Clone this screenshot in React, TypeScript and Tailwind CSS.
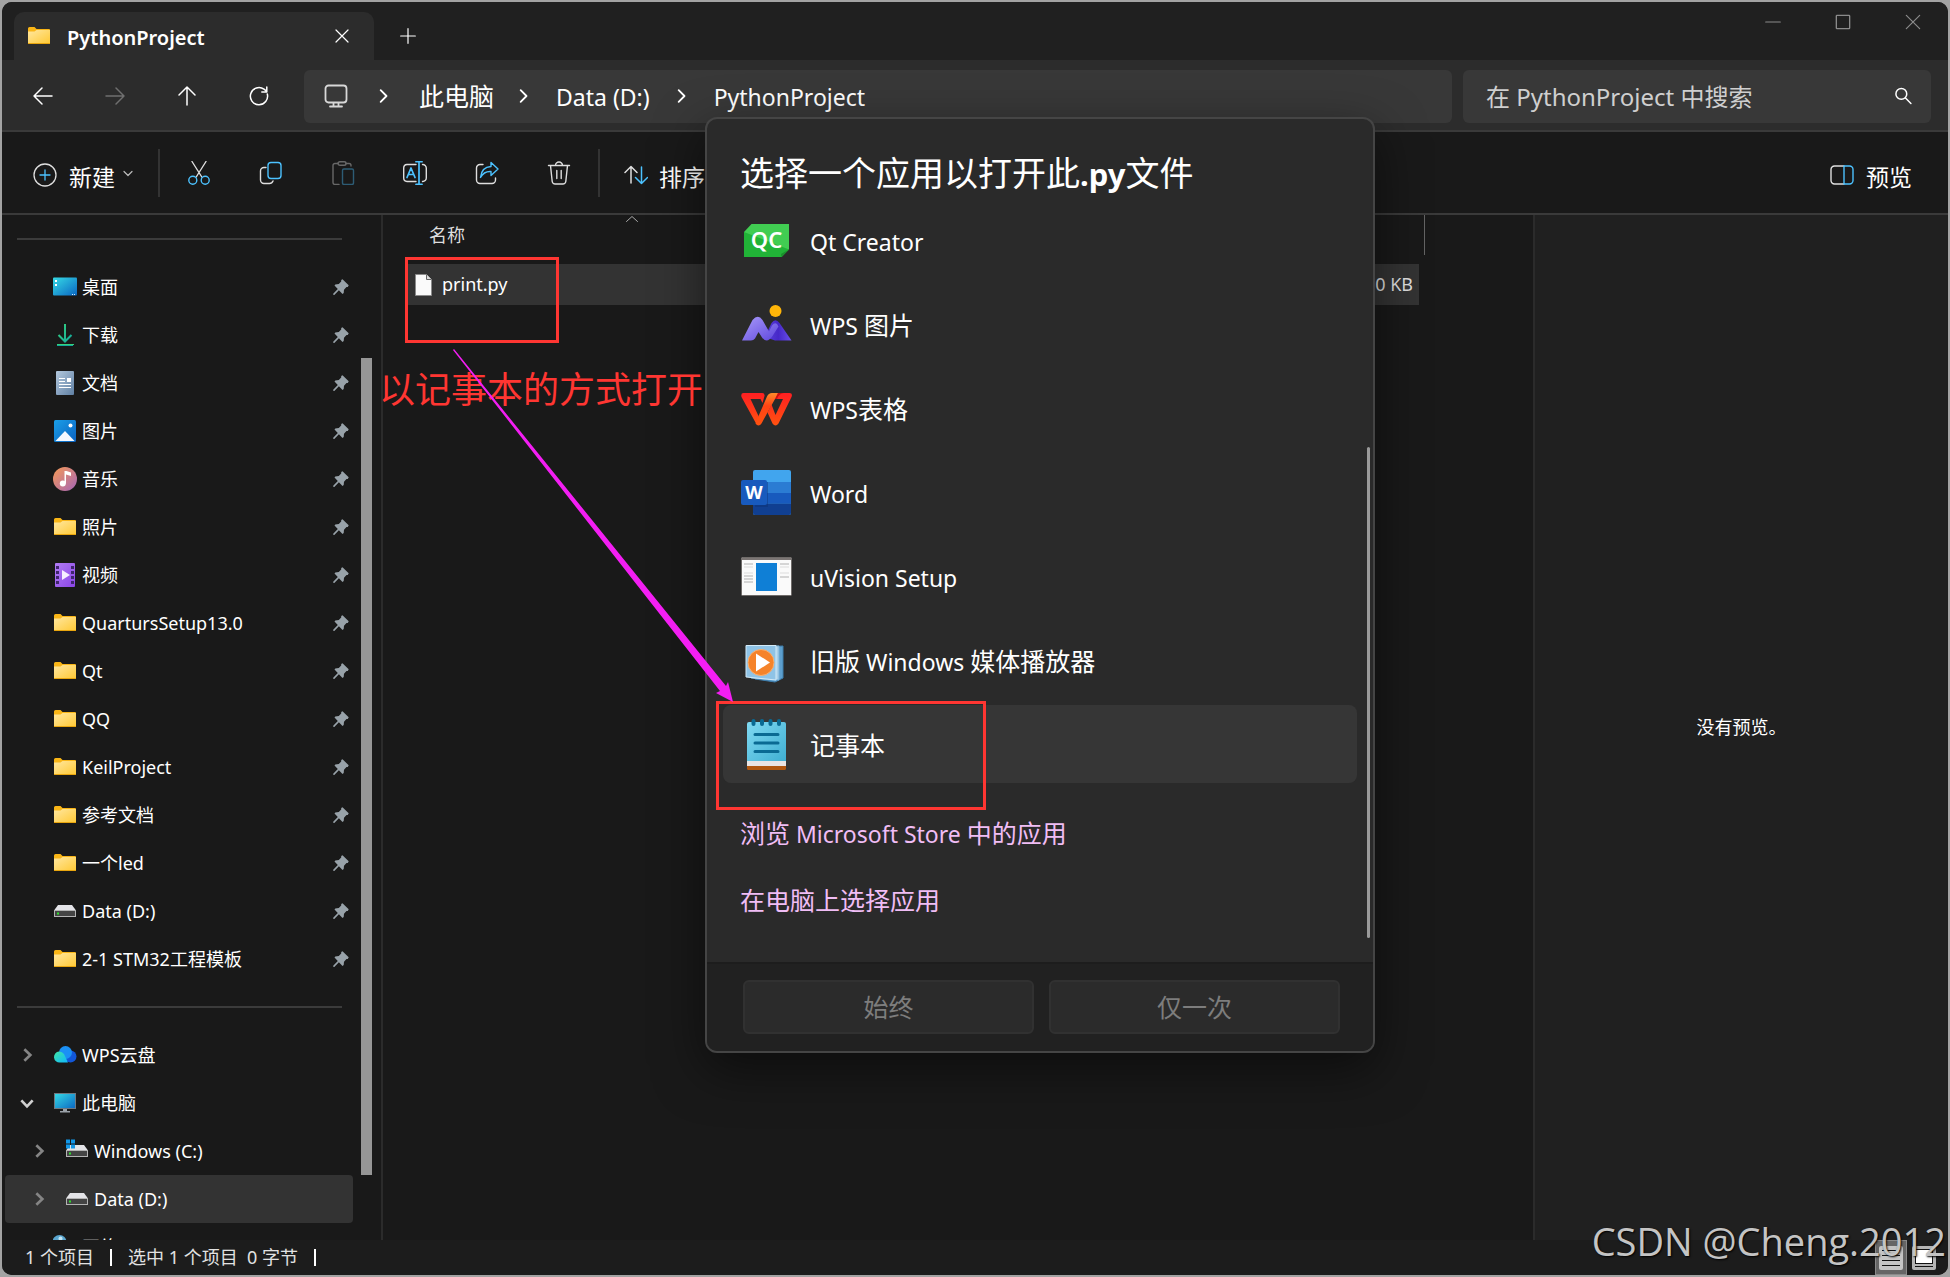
import type { ReactNode } from 'react';

type IconName =
    | 'desktop'
    | 'download'
    | 'document'
    | 'picture'
    | 'music'
    | 'folder'
    | 'video'
    | 'drive'
    | 'cloud'
    | 'pc'
    | 'windrive'
    | 'network';

type NavItem = {
    label: string;
    icon: IconName;
    pinned?: boolean;
    level?: number;
    arrow?: 'right' | 'down';
    active?: boolean;
};

const pinnedItems: NavItem[] = [
    { label: '桌面', icon: 'desktop', pinned: true },
    { label: '下载', icon: 'download', pinned: true },
    { label: '文档', icon: 'document', pinned: true },
    { label: '图片', icon: 'picture', pinned: true },
    { label: '音乐', icon: 'music', pinned: true },
    { label: '照片', icon: 'folder', pinned: true },
    { label: '视频', icon: 'video', pinned: true },
    { label: 'QuartursSetup13.0', icon: 'folder', pinned: true },
    { label: 'Qt', icon: 'folder', pinned: true },
    { label: 'QQ', icon: 'folder', pinned: true },
    { label: 'KeilProject', icon: 'folder', pinned: true },
    { label: '参考文档', icon: 'folder', pinned: true },
    { label: '一个led', icon: 'folder', pinned: true },
    { label: 'Data (D:)', icon: 'drive', pinned: true },
    { label: '2-1 STM32工程模板', icon: 'folder', pinned: true },
];

const treeItems: NavItem[] = [
    { label: 'WPS云盘', icon: 'cloud', arrow: 'right' },
    { label: '此电脑', icon: 'pc', arrow: 'down' },
    { label: 'Windows (C:)', icon: 'windrive', arrow: 'right', level: 1 },
    { label: 'Data (D:)', icon: 'drive', arrow: 'right', level: 1, active: true },
    { label: '网络', icon: 'network', arrow: 'right' },
];

// Latin runs look larger than the Chinese ones at the same size, so they get their own class
function Mixed({ text, latin }: { text: string; latin: string }) {
    return (
        <>
            {text.split(/([\x20-\x7e]+)/).map((part, i) =>
                i % 2 === 1 ? (
                    <span key={i} className={latin}>
                        {part}
                    </span>
                ) : (
                    part
                )
            )}
        </>
    );
}

function Line({ children, className = 'size-6', width = 1.4 }: { children: ReactNode; className?: string; width?: number }) {
    return (
        <svg
            viewBox="0 0 24 24"
            className={`shrink-0 ${className}`}
            fill="none"
            stroke="currentColor"
            strokeWidth={width}
            strokeLinecap="round"
            strokeLinejoin="round"
            aria-hidden="true"
        >
            {children}
        </svg>
    );
}

function FolderIcon() {
    return (
        <svg viewBox="0 0 24 24" className="size-6 shrink-0" aria-hidden="true">
            <defs>
                <linearGradient id="folder" x1="0" y1="0" x2="1" y2="1">
                    <stop offset="0" stopColor="#ffe7a0" />
                    <stop offset="1" stopColor="#ffc935" />
                </linearGradient>
            </defs>
            <path d="M1 4.5Q1 3 2.5 3h5L9.500 5H22q1 0 1 1v13H1z" fill="#f9b516" />
            <path d="M1 7.500h6.500L9.500 6H23v13.500H1z" fill="url(#folder)" />
            <path d="M1 19.500h22" stroke="#e8a50e" />
        </svg>
    );
}

function DriveShape() {
    return (
        <>
            <path d="M5 6h14l4 5.500H1z" fill="#e4e4e8" />
            <rect x="1.500" y="11.500" width="21" height="6" fill="#444" stroke="#b4b4b4" />
            <rect x="4" y="13.500" width="2" height="2" fill="#2fe02f" />
        </>
    );
}

function NavIcon({ name }: { name: IconName }) {
    if (name === 'folder') return <FolderIcon />;
    return (
        <svg viewBox="0 0 24 24" className="size-6 shrink-0" aria-hidden="true">
            <defs>
                <linearGradient id="teal" x1="0" y1="0" x2="1" y2="1">
                    <stop offset="0" stopColor="#36dbe6" />
                    <stop offset="1" stopColor="#0a66c2" />
                </linearGradient>
                <linearGradient id="green" x1="0" y1="0" x2="1" y2="1">
                    <stop offset="0" stopColor="#37d27c" />
                    <stop offset="1" stopColor="#12a89d" />
                </linearGradient>
                <linearGradient id="slate" x1="0" y1="0" x2="1" y2="1">
                    <stop offset="0" stopColor="#b4c9de" />
                    <stop offset="1" stopColor="#5f7fa3" />
                </linearGradient>
                <linearGradient id="blue" x1="0" y1="0" x2="1" y2="1">
                    <stop offset="0" stopColor="#1a9fe8" />
                    <stop offset="1" stopColor="#0b62c0" />
                </linearGradient>
                <linearGradient id="music" x1="0" y1="0" x2="1" y2="1">
                    <stop offset="0" stopColor="#f79a55" />
                    <stop offset="1" stopColor="#a464b8" />
                </linearGradient>
                <linearGradient id="purple" x1="0" y1="0" x2="1" y2="1">
                    <stop offset="0" stopColor="#b27cf5" />
                    <stop offset="1" stopColor="#8a45e6" />
                </linearGradient>
                <linearGradient id="cloudL" x1="0" y1="0" x2="1" y2="1">
                    <stop offset="0" stopColor="#3fe6a4" />
                    <stop offset="1" stopColor="#0fb6ff" />
                </linearGradient>
            </defs>
            {name === 'desktop' && (
                <>
                    <rect y="2.500" width="24" height="18" rx="1" fill="url(#teal)" />
                    <path d="M2 5h2v2H2zM2 9h2v2H2z" fill="#fff" />
                    <path d="M19 19.500h1M21 19.500h1" stroke="#cfe9ff" />
                </>
            )}
            {name === 'download' && (
                <g stroke="url(#green)" strokeWidth="2" fill="none">
                    <path d="M12.010 1 12 18M5.500 12l6.500 6.500 6.500-6.500" />
                    <path d="M4 22h16v.01" />
                </g>
            )}
            {name === 'document' && (
                <>
                    <rect x="3" width="18" height="24" rx="1" fill="url(#slate)" />
                    <path d="M6 7.500h6M6 10.500h6M6 13.500h12M6 16.500h12" stroke="#fff" />
                    <rect x="14" y="7" width="4" height="4" fill="#fff" />
                </>
            )}
            {name === 'picture' && (
                <>
                    <rect x="1" y="1" width="22" height="22" rx="1.500" fill="url(#blue)" />
                    <path d="M2.500 22 12 12l9.500 10z" fill="#f4f9ff" />
                    <circle cx="17.500" cy="6.500" r="2" fill="#fff" />
                </>
            )}
            {name === 'music' && (
                <>
                    <circle cx="12" cy="12" r="12" fill="url(#music)" />
                    <circle cx="9.800" cy="16.500" r="3" fill="#fff" />
                    <path d="M11.500 4h2l4.500 1.500V9l-5-1.500v9h-1.500z" fill="#fff" />
                </>
            )}
            {name === 'video' && (
                <>
                    <rect x="2" width="20" height="24" rx="1" fill="url(#purple)" />
                    <path d="M3 3h3v3H3zM3 8h3v3H3zM3 13h3v3H3zM3 18h3v3H3zM18 3h3v3h-3zM18 8h3v3h-3zM18 13h3v3h-3zM18 18h3v3h-3z" fill="#40256e" />
                    <path d="M9 7v10l8-5z" fill="#f6efff" />
                </>
            )}
            {name === 'drive' && <DriveShape />}
            {name === 'windrive' && (
                <>
                    <DriveShape />
                    <path d="M1 .5h4v4H1zM6 .5h4v4H6zM1 5.500h4v4H1zM6 5.500h4v4H6z" fill="#1297e8" />
                </>
            )}
            {name === 'cloud' && (
                <>
                    <circle cx="17.500" cy="13.500" r="6" fill="#1257d8" />
                    <circle cx="12.500" cy="9.500" r="6.500" fill="#1b90f5" />
                    <path d="M6 8.500a5.500 5.500 0 1 0 1 11h8L11 11a6 6 0 0 0-5-2.500" fill="url(#cloudL)" />
                </>
            )}
            {name === 'pc' && (
                <>
                    <rect x="1.500" y="2.500" width="21" height="15" fill="url(#teal)" stroke="#6f7880" />
                    <path d="M10 18h4v2h3v1.500H7V20h3z" fill="#9aa1a8" />
                </>
            )}
            {name === 'network' && (
                <>
                    <circle cx="6.500" cy="7" r="7" fill="#5aa6cf" />
                    <circle cx="7.500" cy="3.500" r="2" fill="#c3e6f5" />
                </>
            )}
        </svg>
    );
}

function Pin() {
    return (
        <svg viewBox="0 0 16 16" className="size-4 shrink-0" fill="#98a2a9" aria-hidden="true">
            <path d="M9.500.3 15.700 6.200 14.800 8h-1.300L11 10.700l-.3 3.300-1.200.9-3.600-3.700L1.300 16 .2 15.700v-1L4.800 10 1.500 6.500l.8-1.100 3.500-.3L8.200 2.500V1z" />
        </svg>
    );
}

function NavRow({ item }: { item: NavItem }) {
    return (
        <li>
            <button
                type="button"
                className={`flex h-12 w-full items-center rounded-sm pr-1 text-left text-[18px] leading-6 whitespace-nowrap text-white ${
                    item.active ? 'bg-[#333333]' : ''
                } ${item.level ? 'pl-[26px]' : 'pl-[14px]'}`}
            >
                <span className="mr-[18px] flex size-4 items-center justify-center">
                    {item.arrow === 'right' && (
                        <Line className="size-4 text-[#858585]" width={4}>
                            <path d="M8 3.500 17 12l-9 8.500" strokeLinecap="butt" strokeLinejoin="miter" />
                        </Line>
                    )}
                    {item.arrow === 'down' && (
                        <Line className="size-4 text-[#d0d0d0]" width={4}>
                            <path d="M3.500 8 12 17l8.500-9" strokeLinecap="butt" strokeLinejoin="miter" />
                        </Line>
                    )}
                </span>
                <NavIcon name={item.icon} />
                <span className="ml-[5px] flex-1">{item.label}</span>
                {item.pinned && <Pin />}
            </button>
        </li>
    );
}

function TitleBar() {
    return (
        <header className="flex h-[58px] items-end bg-[#202020]">
            <div className="ml-3 flex h-[48px] w-[360px] items-center rounded-t-[10px] bg-[#2c2c2c] pr-6 pl-[13px]">
                <FolderIcon />
                <span className="ml-4 flex-1 pt-[3px] text-[20px] font-semibold text-white">PythonProject</span>
                <button type="button" aria-label="关闭标签页" className="text-white">
                    <Line className="size-4" width={1.8}>
                        <path d="m3 3 18 18M21 3 3 21" />
                    </Line>
                </button>
            </div>
            <button type="button" aria-label="新建标签页" className="mb-4 ml-[26px] text-white">
                <Line className="size-4" width={1.8}>
                    <path d="M12 1v22M1 12h22" />
                </Line>
            </button>
            <div className="ml-auto flex gap-[54px] self-start pt-3 pr-[27px] text-[#8a8a8a]">
                <button type="button" aria-label="最小化">
                    <Line className="size-4" width={1.6}>
                        <path d="M1 12h22" />
                    </Line>
                </button>
                <button type="button" aria-label="最大化">
                    <Line className="size-4" width={2}>
                        <rect x="2" y="2" width="20" height="20" rx="1" />
                    </Line>
                </button>
                <button type="button" aria-label="关闭">
                    <Line className="size-4" width={1.8}>
                        <path d="m2 2 20 20M22 2 2 22" />
                    </Line>
                </button>
            </div>
        </header>
    );
}

function Crumb() {
    return (
        <Line className="size-5 text-white" width={2.2}>
            <path d="m8 5 7 7-7 7" />
        </Line>
    );
}

function AddressBar() {
    return (
        <div className="flex h-[70px] items-center bg-[#2c2c2c] pt-[2px] pr-[17px] pl-[29px]">
            <nav className="flex w-[273px] items-center gap-12 text-white">
                <button type="button" aria-label="后退">
                    <Line width={1.5}>
                        <path d="M21 12H3M11 4l-8 8 8 8" />
                    </Line>
                </button>
                <button type="button" aria-label="前进" className="text-[#6f6f6f]">
                    <Line width={1.5}>
                        <path d="M3 12h18M13 4l8 8-8 8" />
                    </Line>
                </button>
                <button type="button" aria-label="向上">
                    <Line width={1.5}>
                        <path d="M12 21V3M4 11l8-8 8 8" />
                    </Line>
                </button>
                <button type="button" aria-label="刷新">
                    <Line width={1.5}>
                        <path d="M20.300 10A8.600 8.600 0 1 1 17 5.200l2.500 2M19.800 3v5h-5" />
                    </Line>
                </button>
            </nav>
            <div className="flex h-[53px] flex-1 items-center rounded-md bg-[#383838] pl-5 text-[25px] text-white">
                <Line className="size-6 text-[#d8d8d8]" width={1.8}>
                    <rect x="1.500" y="1.500" width="21" height="17" rx="3" />
                    <path d="M9.500 19v2.500M14.500 19v2.500M6 22.500h12" />
                </Line>
                <span className="ml-[26px] flex">
                    <Crumb />
                </span>
                <a href="#pc" className="ml-[25px] pt-[2px]">
                    此电脑
                </a>
                <span className="ml-5 flex">
                    <Crumb />
                </span>
                <a href="#data" className="ml-[22px] pt-[2px] text-[23px]">
                    Data (D:)
                </a>
                <span className="ml-[22px] flex">
                    <Crumb />
                </span>
                <a href="#project" className="ml-[22px] pt-[2px] text-[23px]">
                    PythonProject
                </a>
            </div>
            <label className="ml-[11px] flex h-[53px] w-[468px] items-center rounded-md bg-[#383838] pr-[18px] pl-[23px]">
                <input
                    type="text"
                    aria-label="搜索"
                    placeholder="在 PythonProject 中搜索"
                    className="min-w-0 flex-1 bg-transparent pt-[2px] text-[24px] text-white outline-none placeholder:text-[#cfcfcf]"
                />
                <Line className="size-5 text-white" width={1.8}>
                    <circle cx="10" cy="9.500" r="6.500" />
                    <path d="m15 14.500 6.500 6.500" />
                </Line>
            </label>
        </div>
    );
}

function ToolButton({ label, children }: { label: string; children: ReactNode }) {
    return (
        <button type="button" aria-label={label} className="flex h-12 w-[72px] items-center justify-center text-[#dedede]">
            {children}
        </button>
    );
}

const accent = '#4cc2ff';

function Toolbar() {
    return (
        <div className="flex h-[85px] items-center border-y-2 border-[#3a3a3a] bg-[#191919] pr-9 pl-[31px]">
            <button type="button" className="mt-1 mr-6 flex items-center text-[23px] text-white">
                <Line width={1.3}>
                    <circle cx="12" cy="12" r="11" stroke="#dedede" />
                    <path d="M12 7v10M7 12h10" stroke={accent} />
                </Line>
                <span className="mt-[6px] ml-3">新建</span>
                <Line className="ml-[7px] size-3 text-[#bbb]" width={2.4}>
                    <path d="m4 5 8 8 8-8" />
                </Line>
            </button>
            <span className="h-12 w-[2px] bg-[#333]" />
            <div className="ml-[3px] flex">
                <ToolButton label="剪切">
                    <Line>
                        <path d="M5 .5 14.800 16M19 .5 9.200 16" />
                        <circle cx="5.800" cy="19.300" r="4" stroke={accent} />
                        <circle cx="18.200" cy="19.300" r="4" stroke={accent} />
                    </Line>
                </ToolButton>
                <ToolButton label="复制">
                    <Line>
                        <path d="M7 6.500H5a3.500 3.500 0 0 0-3.500 3.500v9A3.500 3.500 0 0 0 5 22.500h5.500q2.500 0 3.500-2.500" />
                        <rect x="9" y="1.500" width="13" height="16" rx="3" stroke={accent} />
                    </Line>
                </ToolButton>
                <ToolButton label="粘贴">
                    <Line className="size-6 opacity-40">
                        <path d="M7 2.500H4A2 2 0 0 0 2 4.500v17a2 2 0 0 0 2 2h4M15 2.500h3a2 2 0 0 1 2 2V5" />
                        <rect x="7" y=".7" width="8" height="3.600" rx="1.800" />
                        <rect x="11.500" y="8" width="11" height="15.500" rx="1.500" stroke={accent} />
                    </Line>
                </ToolButton>
                <ToolButton label="重命名">
                    <Line>
                        <path d="M13 3.500H4A3.500 3.500 0 0 0 .7 7v10A3.500 3.500 0 0 0 4 20.500h9M19.500 3.500a3.500 3.500 0 0 1 3.800 3.500v10a3.500 3.500 0 0 1-3.800 3.500" />
                        <path d="m4 16.500 4-9.500 4 9.500M5.500 13.500h5M16 1v22M13 .7h6M13 23.300h6" stroke={accent} strokeWidth="1.700" />
                    </Line>
                </ToolButton>
                <ToolButton label="共享">
                    <Line>
                        <path d="M8 3.500H5A3.500 3.500 0 0 0 1.500 7v12A3.500 3.500 0 0 0 5 22.500h12a3.500 3.500 0 0 0 3.500-3.500v-2" />
                        <path d="M16 1.500 23 8l-7 6.500v-4Q9 10 5.500 16.500 6.500 6 16 5.500z" stroke={accent} />
                    </Line>
                </ToolButton>
                <ToolButton label="删除">
                    <Line>
                        <path d="M1.500 4.500h21M8.500 4.500a3.500 3.500 0 0 1 7 0M3.500 4.500l1.700 16a3 3 0 0 0 3 2.500h7.600a3 3 0 0 0 3-2.500l1.700-16M9.800 9.500v8M14.200 9.500v8" />
                    </Line>
                </ToolButton>
            </div>
            <span className="ml-[3px] h-12 w-[2px] bg-[#333]" />
            <button type="button" className="mt-1 ml-6 flex items-center text-[23px] text-white">
                <Line width={1.500}>
                    <path d="M7 20V3.500M1 9.500l6-6 6 6" stroke="#dedede" />
                    <path d="M17.500 4v16.500M11.500 14.500l6 6 6-6" stroke={accent} />
                </Line>
                <span className="mt-[6px] ml-[11px]">排序</span>
            </button>
            <button type="button" className="mt-1 ml-auto flex items-center text-[23px] text-white">
                <Line width={1.400}>
                    <path d="M14 3H4.500A3.500 3.500 0 0 0 1 6.500v11A3.500 3.500 0 0 0 4.500 21H14" stroke="#dedede" />
                    <path d="M14 3h5.500A3.500 3.500 0 0 1 23 6.500v11a3.500 3.500 0 0 1-3.500 3.500H14z" stroke={accent} />
                </Line>
                <span className="mt-[6px] ml-3">预览</span>
            </button>
        </div>
    );
}

function Sidebar() {
    return (
        <aside className="flex w-[381px] shrink-0 border-r-2 border-[#2b2b2b] pl-[3px]">
            <div className="w-[348px] overflow-hidden">
                <div className="flex h-12 items-center pr-[11px] pl-3">
                    <hr className="w-full border-t-2 border-[#3b3b3b]" />
                </div>
                <ul>
                    {pinnedItems.map((item) => (
                        <NavRow key={item.label} item={item} />
                    ))}
                </ul>
                <div className="flex h-12 items-center pr-[11px] pl-3">
                    <hr className="w-full border-t-2 border-[#3b3b3b]" />
                </div>
                <ul>
                    {treeItems.map((item) => (
                        <NavRow key={item.label} item={item} />
                    ))}
                </ul>
            </div>
            <div className="mt-[143px] mb-[65px] ml-2 w-[11px] bg-[#969696]" />
        </aside>
    );
}

function FileList() {
    return (
        <main className="flex min-w-0 flex-1 items-start pl-[24px]">
            <table className="flex-1 border-collapse text-[18px]">
                <thead>
                    <tr>
                        <th className="relative h-[49px] w-[450px] pb-[9px] pl-[22px] text-left font-normal text-[#dedede]">
                            名称
                            <Line className="absolute top-0 left-1/2 -ml-1.5 size-3 text-[#aaa]" width={2}>
                                <path d="M1 13 12 3l11 10" />
                            </Line>
                        </th>
                        <th aria-label="大小" />
                    </tr>
                </thead>
                <tbody>
                    <tr className="h-[41px] bg-[#333333] text-white">
                        <td className="pl-2">
                            <span className="flex items-center gap-[10px]">
                                <svg viewBox="0 0 17 22" className="h-[22px] w-[17px]" aria-hidden="true">
                                    <path d="M.5.5h11l5 5v16H.5z" fill="#fafafa" stroke="#8b8b8b" />
                                    <path d="M11.500.5v5h5" fill="#ddd" stroke="#666" />
                                </svg>
                                <span>print.py</span>
                            </span>
                        </td>
                        <td className="pr-1.5 text-right text-[#dedede]">0 KB</td>
                    </tr>
                </tbody>
            </table>
            <div className="mr-[108px] ml-[5px] h-10 w-px bg-[#636363]" />
        </main>
    );
}

function StatusBar() {
    return (
        <footer className="flex h-[35px] items-center bg-[#1c1c1c] pr-3 pl-[23px] text-[18px] text-[#e2e2e2]">
            <span>1 个项目</span>
            <span className="ml-4 h-[17px] w-[2px] bg-white" />
            <span className="ml-4 whitespace-pre">选中 1 个项目  0 字节</span>
            <span className="ml-4 h-[17px] w-[2px] bg-white" />
            <button
                type="button"
                aria-label="详细信息"
                className="ml-auto flex h-full w-8 items-center justify-center border border-[#8a8a8a] bg-[#666]"
            >
                <svg viewBox="0 0 24 24" className="size-6">
                    <rect width="24" height="24" rx="2" fill="#c4c4c4" />
                    <path d="M3 4.500h18M3 9.500h18M3 14.500h18M3 19.500h18" stroke="#111" />
                </svg>
            </button>
            <button type="button" aria-label="大缩略图" className="ml-[5px]">
                <svg viewBox="0 0 24 24" className="size-6">
                    <rect width="24" height="24" rx="2" fill="#b4b4b4" />
                    <rect x="3.500" y="3.500" width="17" height="14" fill="#fff" stroke="#111" />
                    <path d="M3 20.500h18" stroke="#111" />
                </svg>
            </button>
        </footer>
    );
}

function QtIcon() {
    return (
        <svg viewBox="0 0 51 51" className="size-[51px] shrink-0" aria-hidden="true">
            <path d="M10.500 9H48v25l-7.500 8H3V17z" fill="#41cd52" />
            <path d="M3 17 48 34.500l-7.500 7.500H3z" fill="#21b337" />
            <path d="M48 34.500 40.500 42l-.5-3z" fill="#1a8f2c" />
            <text x="25.500" y="33" textAnchor="middle" fontSize="22" fontWeight="600" fill="#fff" fontFamily="Noto Sans">
                QC
            </text>
        </svg>
    );
}

function WpsPictureIcon() {
    return (
        <svg viewBox="0 0 51 51" className="size-[51px] shrink-0" aria-hidden="true">
            <defs>
                <linearGradient id="hillL" x1="0" y1="0" x2="1" y2="1">
                    <stop offset="0" stopColor="#a99bfa" />
                    <stop offset="1" stopColor="#5d45dc" />
                </linearGradient>
                <linearGradient id="hillR" x1="0" y1="0" x2="1" y2="0">
                    <stop offset="0" stopColor="#5a41dc" />
                    <stop offset="0.500" stopColor="#4628c8" />
                    <stop offset="1" stopColor="#6a50ea" />
                </linearGradient>
            </defs>
            <circle cx="34.500" cy="12" r="6" fill="#ffb508" />
            <path d="M24 38 30.500 24q4-5.500 8 0l12 17.500H34z" fill="url(#hillR)" />
            <path d="M1 41.500 11.500 21q5.500-6.500 10 0L28 32.500l3-6q4-5 6.500 1L31.500 37q-5.500 8-10.500 1.500L17.500 33 14 39.500Q12.500 41.500 10 41.500z" fill="url(#hillL)" />
        </svg>
    );
}

function WpsSheetIcon() {
    return (
        <svg viewBox="0 0 51 51" className="size-[51px] shrink-0" aria-hidden="true">
            <defs>
                <linearGradient id="wps" x1="0" y1="0" x2="0" y2="1">
                    <stop offset="0" stopColor="#ff1f22" />
                    <stop offset="1" stopColor="#ff5210" />
                </linearGradient>
                <linearGradient id="wpsFold" x1="0" y1="0" x2="0" y2="1">
                    <stop offset="0" stopColor="#ff8a2a" />
                    <stop offset="0.400" stopColor="#ff4414" />
                    <stop offset="1" stopColor="#ff5210" />
                </linearGradient>
            </defs>
            <path d="M2.500 10H21q3 0 2.500 3l-2 7-2-4H9.500l8 17 2.500 7.500q-2.500 3.500-5.500-1L.5 14Q-.5 10 2.500 10z" fill="url(#wps)" />
            <path d="M34 10h14.500q3.500 0 2 4L37.500 40.500q-3 4-6 0L26.500 29.500l4-8L34.500 32 42 16h-8z" fill="url(#wps)" />
            <path d="M31 10h6l-3 6L20.500 40.500q-3 4-6 0L17.500 33 26 13.500Q27.500 10 31 10z" fill="url(#wpsFold)" />
            <path d="M37 10h6q-5 .5-7 6h-2z" fill="#c9100f" />
        </svg>
    );
}

function WordIcon() {
    return (
        <svg viewBox="0 0 51 51" className="size-[51px] shrink-0" aria-hidden="true">
            <rect x="12" y="3" width="38" height="45" rx="2" fill="#41a5ee" />
            <path d="M12 15h38v11H12z" fill="#2b7cd3" />
            <path d="M12 26h38v10.500H12z" fill="#185abd" />
            <path d="M12 36.500h38V46q0 2-2 2H14q-2 0-2-2z" fill="#103f91" />
            <path d="M14 15h13v25H14z" fill="#0d2f6e" opacity="0.400" />
            <rect y="13" width="26" height="25" rx="2" fill="#185abd" />
            <text x="13" y="32" textAnchor="middle" fontSize="18" fontWeight="700" fill="#fff" fontFamily="Noto Sans">
                W
            </text>
        </svg>
    );
}

function SetupIcon() {
    return (
        <svg viewBox="0 0 51 51" className="size-[51px] shrink-0" aria-hidden="true">
            <rect x=".5" y="6.500" width="50" height="38" rx="1" fill="#fafafa" stroke="#6f6b69" />
            <path d="M1 7h49v2H1z" fill="#7b7573" />
            <rect x="15" y="12" width="21" height="28" fill="#0f7fd6" />
            <path d="M3 13h9M3 25h9M3 28h9M3 31h9M39 13h9M39 26h9" stroke="#b0b0b0" />
            <path d="M3 16h9M3 22h9M39 16h9M39 22h9" stroke="#dcdcdc" />
        </svg>
    );
}

function MediaIcon() {
    return (
        <svg viewBox="0 0 51 51" className="size-[51px] shrink-0" aria-hidden="true">
            <path d="m14 12 28-1v32l-8 4-20-3z" fill="#5d9fce" stroke="#3f7eac" />
            <path d="M10 11h28v34L10 43z" fill="#a9d0ea" stroke="#7bb2d8" />
            <path d="M5 10.500h30V45L5 42z" fill="#8fc3e6" stroke="#d3eaf8" />
            <circle cx="20" cy="27.500" r="13" fill="#f5832a" stroke="#f9b071" />
            <path d="M15 18.500v18L29 27.500z" fill="#fff" />
        </svg>
    );
}

function NotepadIcon() {
    return (
        <svg viewBox="0 0 51 51" className="size-[51px] shrink-0" aria-hidden="true">
            <defs>
                <linearGradient id="note" x1="0" y1="0" x2="1" y2="1">
                    <stop offset="0" stopColor="#80d9f2" />
                    <stop offset="1" stopColor="#3fafd2" />
                </linearGradient>
            </defs>
            <rect x="6" y="38" width="39" height="13" rx="1.500" fill="#b0560f" />
            <rect x="6" y="36" width="39" height="11" fill="#e9e4e4" />
            <path d="M6 5q0-2 2-2h35q2 0 2 2v37H6z" fill="url(#note)" />
            <g stroke="#0a6a93" strokeLinecap="round">
                <path d="M12.500 2v3M21 2v3M29.500 2v3M38 2v3" strokeWidth="4" />
                <path d="M14 15.500h23M14 24h23M14 32.500h23" strokeWidth="3" />
            </g>
        </svg>
    );
}

const apps = [
    { name: 'Qt Creator', icon: <QtIcon /> },
    { name: 'WPS 图片', icon: <WpsPictureIcon /> },
    { name: 'WPS表格', icon: <WpsSheetIcon /> },
    { name: 'Word', icon: <WordIcon /> },
    { name: 'uVision Setup', icon: <SetupIcon /> },
    { name: '旧版 Windows 媒体播放器', icon: <MediaIcon /> },
    { name: '记事本', icon: <NotepadIcon />, selected: true },
];

function OpenWithDialog() {
    return (
        <section
            role="dialog"
            aria-labelledby="open-with-title"
            className="absolute top-[117px] left-[705px] w-[670px] overflow-hidden rounded-xl border-2 border-[#454545] bg-[#2a2a2a] text-white shadow-[0_16px_50px_rgba(0,0,0,0.5)]"
        >
            <h1 id="open-with-title" className="px-[33px] pt-8 pb-[5px] text-[34px] leading-[44px] font-normal">
                选择一个应用以打开此<b className="text-[31px]">.py</b>文件
            </h1>
            <ul className="flex flex-col gap-[6px] px-4">
                {apps.map((app) => (
                    <li key={app.name}>
                        <button
                            type="button"
                            className={`flex h-[78px] w-full items-center gap-[18px] rounded-lg pl-[18px] text-[25px] ${
                                app.selected ? 'bg-[#363636]' : ''
                            }`}
                        >
                            {app.icon}
                            <span className="mt-1">
                                <Mixed text={app.name} latin="text-[23px]" />
                            </span>
                        </button>
                    </li>
                ))}
            </ul>
            <div className="mt-[17px] flex flex-col px-[33px] pb-[29px] text-[25px] leading-[66px] text-[#f0bdf5]">
                <a href="#store">
                    <Mixed text="浏览 Microsoft Store 中的应用" latin="text-[23px]" />
                </a>
                <a href="#browse">在电脑上选择应用</a>
            </div>
            <div className="grid grid-cols-2 gap-[15px] border-t-2 border-[#1d1d1d] bg-[#212121] pt-4 pr-[33px] pb-[17px] pl-9 text-[25px] text-[#7d7d7d]">
                <button type="button" className="h-[54px] rounded-md border-2 border-[#313131] bg-[#2b2b2b] pt-[2px]">
                    始终
                </button>
                <button type="button" className="h-[54px] rounded-md border-2 border-[#313131] bg-[#2b2b2b] pt-[2px]">
                    仅一次
                </button>
            </div>
            <div className="absolute top-[328px] right-[3px] h-[491px] w-[3px] rounded-full bg-[#9a9a9a]" />
        </section>
    );
}

function Annotations() {
    return (
        <div className="pointer-events-none absolute inset-0 overflow-hidden">
            <p className="absolute top-[364px] left-[379px] text-[36px] leading-[52px] whitespace-nowrap text-[#ff3632]">
                以记事本的方式打开
            </p>
            <div className="absolute top-[257px] left-[405px] h-[86px] w-[154px] border-[3px] border-[#ff3632]" />
            <div className="absolute top-[701px] left-[716px] h-[109px] w-[270px] border-[3px] border-[#ff3632]" />
            <svg className="absolute top-0 left-0 size-full">
                <path d="m453 350 1-1 272 337 2-4 5 20-17-9 4-2z" fill="#f31ef3" />
            </svg>
            <p className="absolute right-1 bottom-[10px] font-['Open_Sans',sans-serif] text-[38px] leading-[52px] text-[#c4c4c4] [text-shadow:1px_1px_2px_#000]">
                CSDN @Cheng.2012
            </p>
        </div>
    );
}

export default function App() {
    return (
        <div className="relative h-screen overflow-hidden bg-[#a3a3a3] p-[2px] font-['Noto_Sans','Noto_Sans_CJK_SC',sans-serif]">
            <div className="flex h-full flex-col overflow-hidden rounded-[10px] bg-[#191919]">
                <TitleBar />
                <AddressBar />
                <Toolbar />
                <div className="flex min-h-0 flex-1">
                    <Sidebar />
                    <FileList />
                    <section className="flex w-[415px] shrink-0 items-center justify-center border-l-2 border-[#2b2b2b] bg-[#202020] text-[18px] text-white">
                        没有预览。
                    </section>
                </div>
                <StatusBar />
            </div>
            <OpenWithDialog />
            <Annotations />
        </div>
    );
}
